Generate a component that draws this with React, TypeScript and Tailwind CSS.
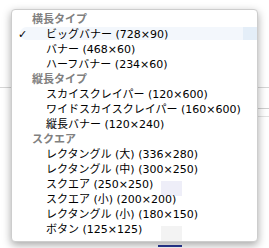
import React from "react";

const groups = [
  { title: "横長タイプ", items: ["ビッグバナー (728×90)", "バナー (468×60)", "ハーフバナー (234×60)"] },
  { title: "縦長タイプ", items: ["スカイスクレイパー (120×600)", "ワイドスカイスクレイパー (160×600)", "縦長バナー (120×240)"] },
  {
    title: "スクエア",
    items: [
      "レクタングル (大) (336×280)",
      "レクタングル (中) (300×250)",
      "スクエア (250×250)",
      "スクエア (小) (200×200)",
      "レクタングル (小) (180×150)",
      "ボタン (125×125)",
    ],
  },
];

export default function App() {
  return (
    <div
      className="relative w-[269px] h-[248px] overflow-hidden bg-white"
      style={{ fontFamily: '"DejaVu Sans", "Noto Sans CJK JP", sans-serif' }}
    >
      {/* background page content */}
      <div className="absolute left-0 right-0 top-[87px] h-px bg-[#d6d6d6]" />
      <div className="absolute left-[240px] right-0 top-[108px] h-px bg-[#cfcfcf]" />
      <div className="absolute left-[240px] right-0 top-[116px] h-px bg-[#e2e2e2]" />
      <div className="absolute left-[158px] w-[24px] top-[245px] h-[2px] bg-[#2a3a9a]" />

      {/* popup menu */}
      <div className="absolute left-[11px] top-[9px] w-[247px] h-[233px] rounded-[4px] border border-[#cdcdcd] bg-white shadow-[0_3px_9px_rgba(0,0,0,0.35)] overflow-hidden">
        {/* faint see-through content */}
        <div className="absolute left-[8px] right-0 top-[17px] h-[13px] rounded-l-full bg-[#f3f7fc]" />
        <div className="absolute right-0 w-[14px] top-[17px] h-[13px] bg-[#e4eef8]" />
        <div className="absolute left-[149px] w-[21px] top-[171px] h-[15px] bg-[#eeeef8]" />
        <div className="absolute left-[149px] w-[21px] top-[216px] h-[15px] bg-[#f3f3f3]" />

        <div className="relative flex flex-col pt-[2px]">
          {groups.map((g, gi) => (
            <React.Fragment key={gi}>
              <div className="h-[15px] leading-[15px] pl-[20px] text-[11px] font-bold text-[#808080] whitespace-nowrap">
                {g.title}
              </div>
              {g.items.map((it, ii) => (
                <div key={ii} className="flex h-[15px] leading-[15px] text-[11px] text-black whitespace-nowrap">
                  <span className="w-[34px] pl-[6px] font-bold">{gi === 0 && ii === 0 ? "✓" : ""}</span>
                  <span>{it}</span>
                </div>
              ))}
            </React.Fragment>
          ))}
        </div>
      </div>
    </div>
  );
}
